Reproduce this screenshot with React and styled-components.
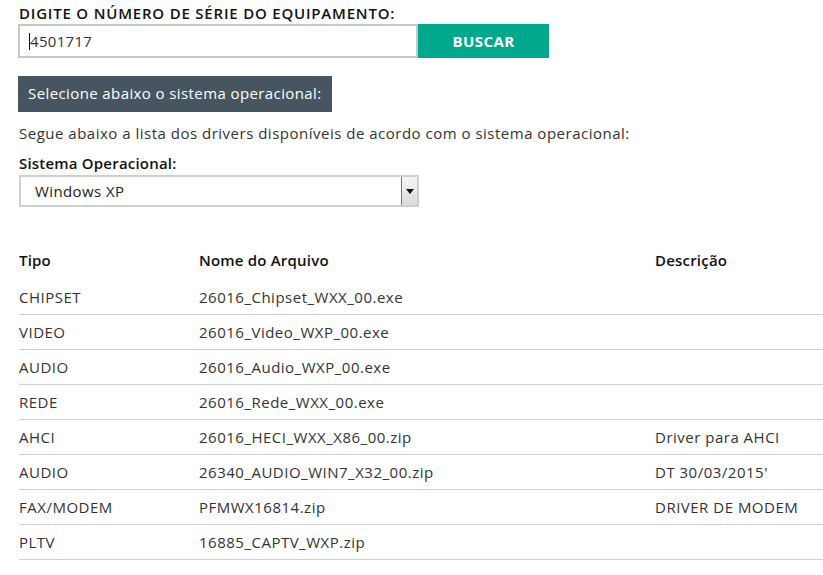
import React from "react";
import styled, { createGlobalStyle } from "styled-components";

const Global = createGlobalStyle`
  html, body { margin: 0; padding: 0; background: #fff; }
  body { font-family: "Open Sans", "Noto Sans", Arial, sans-serif; color: #222; }
  * { box-sizing: border-box; }
`;

const Page = styled.div`
  padding: 4px 0 0 19px;
  width: 823px;
  overflow: hidden;
`;

const Label = styled.div`
  font-size: 15px;
  font-weight: 600;
  color: #111;
  line-height: 19px;
  letter-spacing: ${(p) => (p.$caps ? "0.8px" : "0.2px")};
`;

const SearchRow = styled.div`
  display: flex;
  margin-top: 1px;
  margin-left: -1px;
`;

const SerialInput = styled.div`
  width: 400px;
  height: 34px;
  border: 2px solid #c8c8c8;
  display: flex;
  align-items: center;
  padding-left: 9px;
  font-size: 15px;
  color: #333;
  letter-spacing: 0.3px;
`;

const Caret = styled.span`
  display: inline-block;
  width: 1px;
  height: 17px;
  background: #111;
`;

const SearchButton = styled.button`
  width: 131px;
  height: 34px;
  border: none;
  background: #00a98c;
  color: #fff;
  font-family: inherit;
  font-size: 15px;
  font-weight: 700;
  letter-spacing: 0.4px;
`;

const Banner = styled.div`
  display: inline-block;
  margin-top: 18px;
  margin-left: -1px;
  background: #46555f;
  color: #fff;
  font-size: 15px;
  letter-spacing: 0.4px;
  padding: 8px 10px 9px 10px;
  line-height: 19px;
`;

const Paragraph = styled.p`
  margin: 12px 0 11px 0;
  font-size: 15px;
  letter-spacing: 0.5px;
  color: #333;
  line-height: 19px;
`;

const SelectBox = styled.div`
  margin-top: 2px;
  width: 400px;
  height: 32px;
  border: 2px solid #cfcfcf;
  display: flex;
  align-items: center;
  justify-content: space-between;
  font-size: 15px;
  letter-spacing: 0.4px;
  color: #222;
  padding-left: 14px;
`;

const Arrow = styled.div`
  width: 16px;
  height: 28px;
  border-left: 1px solid #777;
  background: linear-gradient(#f4f4f4, #dcdcdc);
  display: flex;
  align-items: center;
  justify-content: center;
  &::after {
    content: "";
    border-left: 4px solid transparent;
    border-right: 4px solid transparent;
    border-top: 5px solid #111;
  }
`;

const Table = styled.div`
  margin-top: 33px;
  width: 900px;
`;

const Row = styled.div`
  display: grid;
  grid-template-columns: 180px 456px 1fr;
  align-items: center;
  font-size: 15px;
  letter-spacing: ${(p) => (p.$head ? "0.2px" : "0.5px")};
  color: ${(p) => (p.$head ? "#111" : "#333")};
  font-weight: ${(p) => (p.$head ? 600 : 400)};
  border-bottom: ${(p) => (p.$head ? "none" : "1px solid #cfcfd4")};
  height: ${(p) => (p.$head ? "40px" : "35px")};
`;

const rows = [
  ["CHIPSET", "26016_Chipset_WXX_00.exe", ""],
  ["VIDEO", "26016_Video_WXP_00.exe", ""],
  ["AUDIO", "26016_Audio_WXP_00.exe", ""],
  ["REDE", "26016_Rede_WXX_00.exe", ""],
  ["AHCI", "26016_HECI_WXX_X86_00.zip", "Driver para AHCI"],
  ["AUDIO", "26340_AUDIO_WIN7_X32_00.zip", "DT 30/03/2015'"],
  ["FAX/MODEM", "PFMWX16814.zip", "DRIVER DE MODEM"],
  ["PLTV", "16885_CAPTV_WXP.zip", ""],
];

export default function App() {
  return (
    <>
      <Global />
      <Page>
        <Label $caps>DIGITE O NÚMERO DE SÉRIE DO EQUIPAMENTO:</Label>
        <SearchRow>
          <SerialInput>
            <Caret />
            4501717
          </SerialInput>
          <SearchButton>BUSCAR</SearchButton>
        </SearchRow>
        <Banner>Selecione abaixo o sistema operacional:</Banner>
        <Paragraph>
          Segue abaixo a lista dos drivers disponíveis de acordo com o sistema operacional:
        </Paragraph>
        <Label>Sistema Operacional:</Label>
        <SelectBox>
          Windows XP
          <Arrow />
        </SelectBox>
        <Table>
          <Row $head>
            <span>Tipo</span>
            <span>Nome do Arquivo</span>
            <span>Descrição</span>
          </Row>
          {rows.map((r, i) => (
            <Row key={i}>
              <span>{r[0]}</span>
              <span>{r[1]}</span>
              <span>{r[2]}</span>
            </Row>
          ))}
        </Table>
      </Page>
    </>
  );
}
